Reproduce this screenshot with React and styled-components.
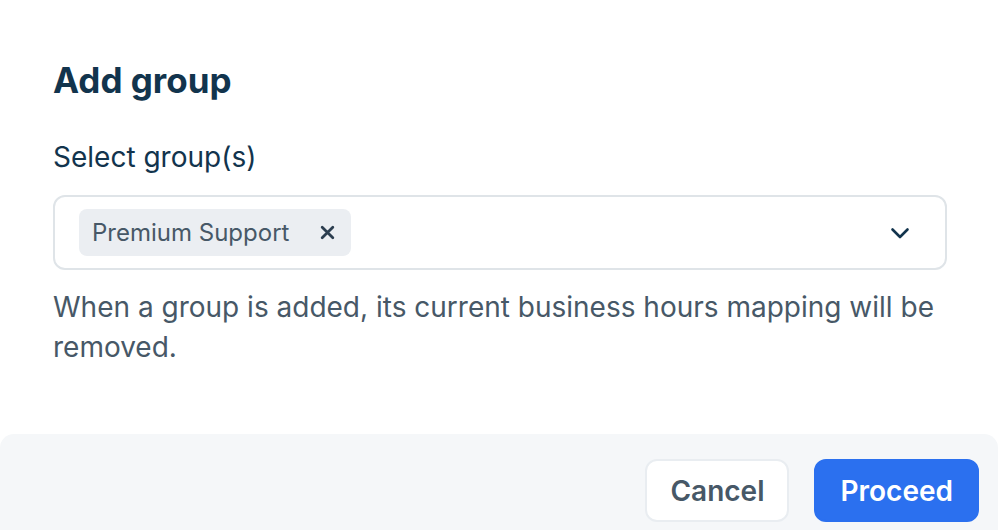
import React from "react";
import styled, { createGlobalStyle } from "styled-components";

const Global = createGlobalStyle`
  html, body { margin: 0; padding: 0; background: #ffffff; }
  body { font-family: Inter, "Noto Sans", sans-serif; -webkit-font-smoothing: antialiased; }
  * { box-sizing: border-box; }
`;

const Dialog = styled.div`
  width: 998px;
  height: 530px;
  display: flex;
  flex-direction: column;
  background: #ffffff;
  overflow: hidden;
`;

const Body = styled.div`
  flex: 1;
  padding: 58px 51px 0 53px;
  display: flex;
  flex-direction: column;
`;

const Title = styled.h2`
  margin: 0;
  font-size: 35px;
  line-height: 44px;
  font-weight: 700;
  color: #12344d;
`;

const Label = styled.label`
  margin-top: 37px;
  font-size: 28px;
  line-height: 36px;
  font-weight: 400;
  color: #12344d;
`;

const Select = styled.div`
  margin-top: 20px;
  height: 75px;
  border: 2px solid #dfe4e8;
  border-radius: 12px;
  display: flex;
  align-items: center;
  justify-content: space-between;
  padding: 0 35px 0 24px;
`;

const Chip = styled.div`
  height: 47px;
  display: flex;
  align-items: center;
  gap: 30px;
  padding: 0 15px 0 13px;
  background: #ebeef2;
  border-radius: 8px;
  font-size: 24px;
  color: #475867;
`;

const ChipClose = styled.span`
  display: flex;
  align-items: center;
  color: #2c3e50;
`;

const Chevron = styled.span`
  display: flex;
  align-items: center;
  color: #12344d;
`;

const Help = styled.p`
  margin: 17px 0 0;
  font-size: 28px;
  line-height: 40px;
  color: #475867;
`;

const Footer = styled.div`
  height: 96px;
  background: #f5f7f9;
  border-radius: 14px 14px 0 0;
  display: flex;
  align-items: flex-start;
  justify-content: flex-end;
  gap: 25px;
  padding: 25px 19px 0 0;
`;

const Button = styled.button`
  height: 63px;
  padding: 0 ${(p) => (p.$primary ? "24px" : "23px")};
  border-radius: 12px;
  border: 2px solid ${(p) => (p.$primary ? "#2b70ef" : "#e9edf1")};
  background: ${(p) => (p.$primary ? "#2b70ef" : "#ffffff")};
  color: ${(p) => (p.$primary ? "#ffffff" : "#475867")};
  font-family: Inter, "Noto Sans", sans-serif;
  font-size: 28px;
  font-weight: 600;
  cursor: pointer;
`;

export default function App() {
  return (
    <>
      <Global />
      <Dialog>
        <Body>
          <Title>Add group</Title>
          <Label>Select group(s)</Label>
          <Select>
            <Chip>
              Premium Support
              <ChipClose>
                <svg width="17" height="17" viewBox="0 0 16 16" fill="none" stroke="currentColor" strokeWidth="2.6" strokeLinecap="round">
                  <path d="M3 3l10 10M13 3L3 13" />
                </svg>
              </ChipClose>
            </Chip>
            <Chevron>
              <svg width="20" height="12" viewBox="0 0 20 12" fill="none" stroke="currentColor" strokeWidth="2.6" strokeLinecap="round" strokeLinejoin="round">
                <path d="M2.5 2.5l7.5 7.5 7.5-7.5" />
              </svg>
            </Chevron>
          </Select>
          <Help>
            When a group is added, its current business hours mapping will be removed.
          </Help>
        </Body>
        <Footer>
          <Button>Cancel</Button>
          <Button $primary>Proceed</Button>
        </Footer>
      </Dialog>
    </>
  );
}
